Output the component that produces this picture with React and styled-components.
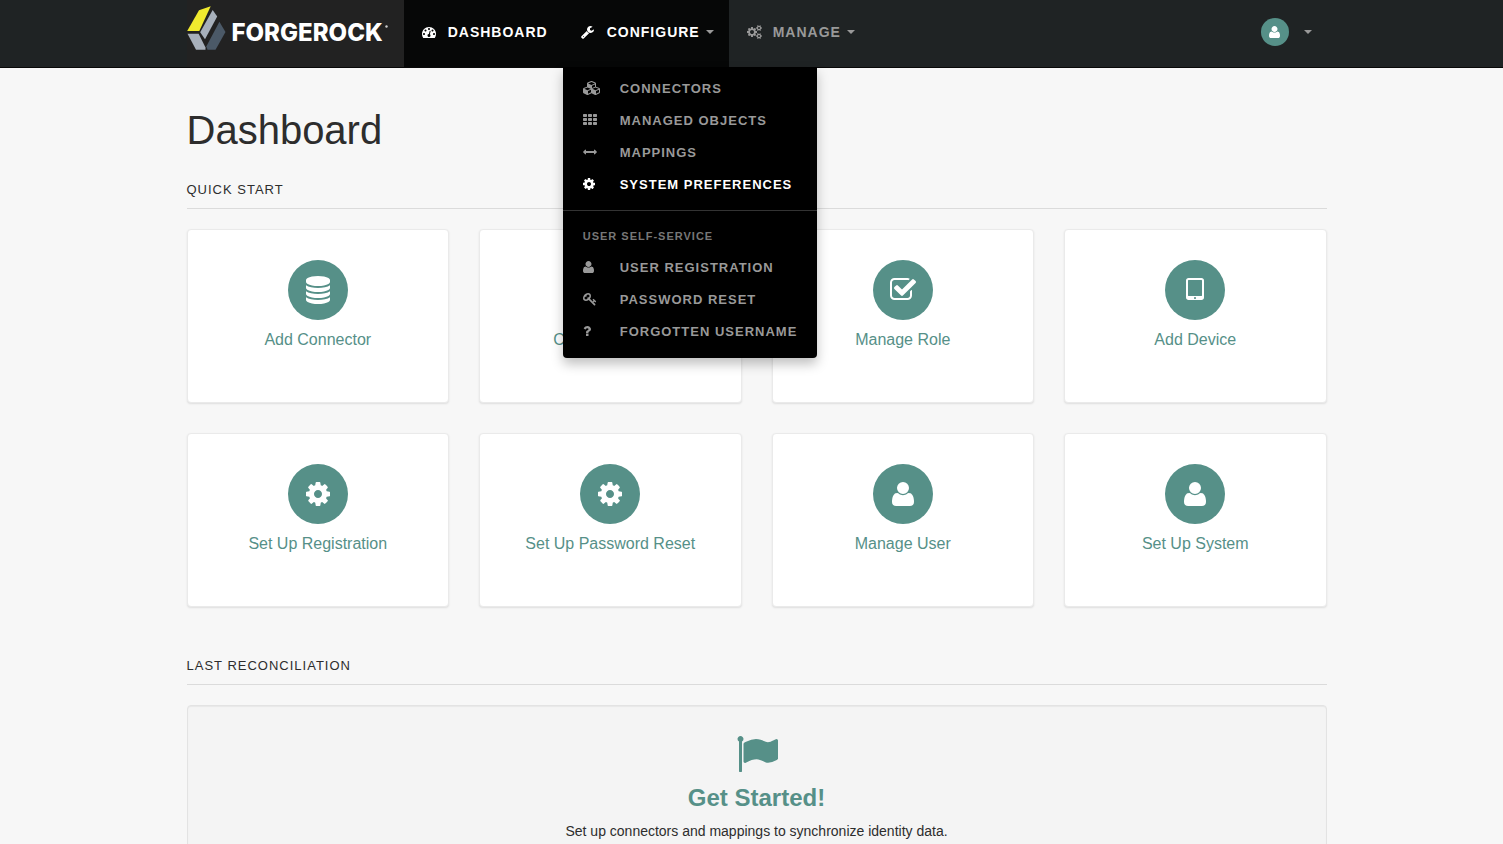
import styled, { createGlobalStyle } from "styled-components";

const teal = '#569088'

// each icon: [left edge, width, path] on a 1792 unit grid
const icons = {
    dashboard: [0, 1792, "M384 1152q0-53-37.500-90.500t-90.500-37.500-90.500 37.500-37.500 90.500 37.500 90.500 90.500 37.500 90.500-37.500 37.500-90.500zm192-448q0-53-37.500-90.500t-90.500-37.500-90.500 37.500-37.500 90.500 37.500 90.500 90.500 37.500 90.500-37.500 37.500-90.500zm428 481l101-382q6-26-7.500-48.500t-38.500-29.500-48 6.500-30 39.500l-101 382q-60 5-107 43.500t-63 98.500q-20 77 20 146t117 89 146-20 89-117q16-60-6-117t-72-91zm660-33q0-53-37.500-90.500t-90.500-37.500-90.500 37.500-37.500 90.500 37.500 90.500 90.500 37.500 90.500-37.500 37.500-90.500zm-640-640q0-53-37.500-90.500t-90.500-37.500-90.500 37.500-37.500 90.500 37.500 90.500 90.500 37.500 90.500-37.500 37.500-90.500zm448 192q0-53-37.500-90.500t-90.500-37.500-90.500 37.500-37.500 90.500 37.500 90.500 90.500 37.500 90.500-37.500 37.500-90.500zm320 448q0 261-141 483-19 29-54 29h-1402q-35 0-54-29-141-221-141-483 0-182 71-348t191-286 286-191 348-71 348 71 286 191 191 286 71 348z"],
    wrench: [64, 1664, "M448 1472q0-26-19-45t-45-19-45 19-19 45 19 45 45 19 45-19 19-45zm644-420l-682 682q-37 37-90 37-52 0-91-37l-106-108q-38-36-38-90 0-53 38-91l681-681q39 98 114.500 173.500t173.500 114.500zm634-435q0 39-23 106-47 134-164.500 217.500t-258.500 83.500q-185 0-316.500-131.500t-131.500-316.500 131.500-316.500 316.500-131.500q58 0 121.500 16.500t107.500 46.500q16 11 16 28t-16 28l-293 169v224l193 107q5-3 79-48.500t135.500-81 70.500-35.500q15 0 23.500 10t8.500 25z"],
    cogs: [0, 1920, "M896 896q0-106-75-181t-181-75-181 75-75 181 75 181 181 75 181-75 75-181zm768 512q0-52-38-90t-90-38-90 38-38 90q0 53 37.500 90.500t90.500 37.500 90.500-37.500 37.500-90.500zm0-1024q0-52-38-90t-90-38-90 38-38 90q0 53 37.500 90.500t90.500 37.500 90.500-37.500 37.500-90.500zm-384 421v185q0 10-7 19.500t-16 10.500l-155 24q-11 35-32 76 34 48 90 115 7 11 7 20 0 12-7 19-23 30-82.500 89.500t-78.500 59.500q-11 0-21-7l-115-90q-37 19-77 31-11 108-23 155-7 24-30 24h-186q-11 0-20-7.500t-10-17.500l-23-153q-34-10-75-31l-118 89q-7 7-20 7-11 0-21-8-144-133-144-160 0-9 7-19 10-14 41-53t47-61q-23-44-35-82l-152-24q-10-1-17-9.500t-7-19.500v-185q0-10 7-19.500t16-10.500l155-24q11-35 32-76-34-48-90-115-7-11-7-20 0-12 7-20 22-30 82-89t79-59q11 0 21 7l115 90q34-18 77-32 11-108 23-154 7-24 30-24h186q11 0 20 7.500t10 17.500l23 153q34 10 75 31l118-89q8-7 20-7 11 0 21 8 144 133 144 160 0 8-7 19-12 16-42 54t-45 60q23 48 34 82l152 23q10 2 17 10.500t7 19.500zm640 533v140q0 16-149 31-12 27-30 52 51 113 51 138 0 4-4 7-122 71-124 71-8 0-46-47t-52-68q-20 2-30 2t-30-2q-14 21-52 68t-46 47q-2 0-124-71-4-3-4-7 0-25 51-138-18-25-30-52-149-15-149-31v-140q0-16 149-31 13-29 30-52-51-113-51-138 0-4 4-7 4-2 35-20t59-34 30-16q8 0 46 46.500t52 67.500q20-2 30-2t30 2q51-71 92-112l6-2q4 0 124 70 4 3 4 7 0 25-51 138 17 23 30 52 149 15 149 31zm0-1024v140q0 16-149 31-12 27-30 52 51 113 51 138 0 4-4 7-122 71-124 71-8 0-46-47t-52-68q-20 2-30 2t-30-2q-14 21-52 68t-46 47q-2 0-124-71-4-3-4-7 0-25 51-138-18-25-30-52-149-15-149-31v-140q0-16 149-31 13-29 30-52-51-113-51-138 0-4 4-7 4-2 35-20t59-34 30-16q8 0 46 46.500t52 67.500q20-2 30-2t30 2q51-71 92-112l6-2q4 0 124 70 4 3 4 7 0 25-51 138 17 23 30 52 149 15 149 31z"],
    cubes: [0, 2304, "M640 1632l384-192v-314l-384 164v342zm-64-454l404-173-404-173-404 173zm1088 454l384-192v-314l-384 164v342zm-64-454l404-173-404-173-404 173zm-448-293l384-165v-266l-384 164v267zm-64-379l441-189-441-189-441 189zm1088 518v416q0 36-19 67t-52 47l-448 224q-25 14-57 14t-57-14l-448-224q-4-2-7-4-2 2-7 4l-448 224q-25 14-57 14t-57-14l-448-224q-33-16-52-47t-19-67v-416q0-38 21.500-70t56.500-48l434-186v-400q0-38 21.500-70t56.500-48l448-192q23-10 50-10t50 10l448 192q35 16 56.500 48t21.500 70v400l434 186q36 16 57 48t21 70z"],
    grid: [64, 1664, "M160 1152h320q96 0 96 96v192q0 96-96 96h-320q-96 0-96-96v-192q0-96 96-96zM160 640h320q96 0 96 96v192q0 96-96 96h-320q-96 0-96-96v-192q0-96 96-96zM160 128h320q96 0 96 96v192q0 96-96 96h-320q-96 0-96-96v-192q0-96 96-96zM800 1152h320q96 0 96 96v192q0 96-96 96h-320q-96 0-96-96v-192q0-96 96-96zM800 640h320q96 0 96 96v192q0 96-96 96h-320q-96 0-96-96v-192q0-96 96-96zM800 128h320q96 0 96 96v192q0 96-96 96h-320q-96 0-96-96v-192q0-96 96-96zM1440 1152h320q96 0 96 96v192q0 96-96 96h-320q-96 0-96-96v-192q0-96 96-96zM1440 640h320q96 0 96 96v192q0 96-96 96h-320q-96 0-96-96v-192q0-96 96-96zM1440 128h320q96 0 96 96v192q0 96-96 96h-320q-96 0-96-96v-192q0-96 96-96z"],
    arrows: [0, 1792, "M1792 896q0 26-19 45l-256 256q-19 19-45 19t-45-19-19-45v-128h-1024v128q0 26-19 45t-45 19-45-19l-256-256q-19-19-19-45t19-45l256-256q19-19 45-19t45 19 19 45v128h1024v-128q0-26 19-45t45-19 45 19l256 256q19 19 19 45z"],
    cog: [128, 1536, "M1152 896q0-106-75-181t-181-75-181 75-75 181 75 181 181 75 181-75 75-181zm512-109v222q0 12-8 23t-20 13l-185 28q-19 54-39 91 35 50 107 138 10 12 10 25t-9 23q-27 37-99 108t-94 71q-12 0-26-9l-138-108q-44 23-91 38-16 136-29 186-7 28-36 28h-222q-14 0-24.500-8.500t-11.500-21.500l-28-184q-49-16-90-37l-141 107q-10 9-25 9-14 0-25-11-126-114-165-168-7-10-7-23 0-12 8-23 15-21 51-66.500t54-70.500q-27-50-41-99l-183-27q-13-2-21-12.500t-8-23.500v-222q0-12 8-23t19-13l186-28q14-46 39-92-40-57-107-138-10-12-10-24 0-10 9-23 26-36 98.500-107.500t94.500-71.500q13 0 26 10l138 107q44-23 91-38 16-136 29-186 7-28 36-28h222q14 0 24.500 8.500t11.500 21.500l28 184q49 16 90 37l142-107q9-9 24-9 13 0 25 10 129 119 165 170 7 8 7 22 0 12-8 23-15 21-51 66.500t-54 70.500q26 50 41 98l183 28q13 2 21 12.500t8 23.500z"],
    user: [192, 1408, "M1600 1405q0 120-73 189.500t-194 69.500h-874q-121 0-194-69.500t-73-189.500q0-53 3.500-103.500t14-109 26.500-108.500 43-97.500 62-81 85.500-53.500 111.500-20q9 0 42 21.500t74.500 48 108 48 133.500 21.500 133.500-21.500 108-48 74.500-48 42-21.500q61 0 111.500 20t85.500 53.500 62 81 43 97.500 26.500 108.500 14 109 3.500 103.500zm-320-893q0 159-112.500 271.500t-271.500 112.500-271.500-112.500-112.500-271.500 112.500-271.500 271.500-112.500 271.500 112.500 112.500 271.500z"],
    key: [0, 1792, "M832 512q0-80-56-136t-136-56-136 56-56 136q0 42 19 83-41-19-83-19-80 0-136 56t-56 136 56 136 136 56 136-56 56-136q0-42-19-83 41 19 83 19 80 0 136-56t56-136zm851 704q0 17-49 66t-66 49q-9 0-28.500-16t-36.500-33-38.500-40-24.500-26l-96 96 220 220q28 28 28 68 0 42-39 81t-81 39q-40 0-68-28l-671-671q-176 131-365 131-163 0-265.500-102.500t-102.500-265.500q0-160 95-313t248-248 313-95q163 0 265.500 102.500t102.500 265.500q0 189-131 365l355 355 96-96q-3-3-26-24.500t-40-38.500-33-36.500-16-28.500q0-17 49-66t66-49q13 0 23 10 6 6 46 44.500t82 79.500 86.500 86 73 78 28.500 41z"],
    question: [384, 1152, "M1088 1256v240q0 16-12 28t-28 12h-240q-16 0-28-12t-12-28v-240q0-16 12-28t28-12h240q16 0 28 12t12 28zm316-600q0 54-15.500 101t-35 76.500-55 59.500-57.500 43.500-61 35.500q-41 23-68.500 65t-27.500 67q0 17-12 32.500t-28 15.500h-240q-15 0-25.500-18.500t-10.500-37.500v-45q0-83 65-156.500t143-108.500q59-27 84-56t25-76q0-42-46.500-74t-107.500-32q-65 0-108 29-35 25-107 115-13 16-31 16-12 0-25-8l-164-125q-13-10-15.500-25t5.500-28q160-266 464-266 80 0 161 31t146 83 106 127.500 41 158.500z"],
    database: [128, 1536, "M896 768q237 0 443-43t325-127v170q0 69-103 128t-280 93.500-385 34.500-385-34.500-280-93.500-103-128v-170q119 84 325 127t443 43zm0 768q237 0 443-43t325-127v170q0 69-103 128t-280 93.500-385 34.500-385-34.500-280-93.500-103-128v-170q119 84 325 127t443 43zm0-384q237 0 443-43t325-127v170q0 69-103 128t-280 93.500-385 34.500-385-34.500-280-93.500-103-128v-170q119 84 325 127t443 43zm0-1152q208 0 385 34.500t280 93.500 103 128v128q0 69-103 128t-280 93.500-385 34.500-385-34.500-280-93.500-103-128v-128q0-69 103-128t280-93.500 385-34.500z"],
    check: [64, 1664, "M1472 930v318q0 119-84.500 203.500t-203.500 84.500h-832q-119 0-203.500-84.500t-84.500-203.500v-832q0-119 84.500-203.500t203.500-84.500h832q63 0 117 25 15 7 18 23 3 17-9 29l-49 49q-10 10-23 10-3 0-9-2-23-6-45-6h-832q-66 0-113 47t-47 113v832q0 66 47 113t113 47h832q66 0 113-47t47-113v-254q0-13 9-22l64-64q10-10 23-10 6 0 12 3 20 8 20 29zm231-489l-814 814q-24 24-57 24t-57-24l-430-430q-24-24-24-57t24-57l110-110q24-24 57-24t57 24l263 263 647-647q24-24 57-24t57 24l110 110q24 24 24 57t-24 57z"],
    tablet: [320, 1152, "M960 1408q0-26-19-45t-45-19-45 19-19 45 19 45 45 19 45-19 19-45zm384-160v-960q0-13-9.500-22.500t-22.500-9.500h-832q-13 0-22.500 9.500t-9.500 22.500v960q0 13 9.500 22.500t22.500 9.500h832q13 0 22.500-9.500t9.500-22.500zm128-960v1088q0 66-47 113t-113 47h-832q-66 0-113-47t-47-113v-1088q0-66 47-113t113-47h832q66 0 113 47t47 113z"],
    flag: [0, 1792, "M320 256q0 72-64 110v1266q0 13-9.500 22.500t-22.500 9.500h-64q-13 0-22.500-9.500t-9.500-22.500v-1266q-64-38-64-110 0-53 37.500-90.500t90.500-37.500 90.500 37.500 37.500 90.500zm1472 64v763q0 25-12.500 38.500t-39.500 27.500q-215 116-369 116-61 0-123.500-22t-108.500-48-115.500-48-142.500-22q-192 0-464 146-17 9-33 9-26 0-45-19t-19-45v-742q0-32 31-55 21-14 79-43 236-120 421-120 107 0 200 29t219 88q38 19 88 19 54 0 117.500-21t110-47 88-47 54.500-21q26 0 45 19t19 45z"],
}

const cards = [
    { icon: 'database', label: 'Add Connector' },
    { icon: 'arrows', label: 'Create Mapping' },
    { icon: 'check', label: 'Manage Role' },
    { icon: 'tablet', label: 'Add Device' },
    { icon: 'cog', label: 'Set Up Registration' },
    { icon: 'cog', label: 'Set Up Password Reset' },
    { icon: 'user', label: 'Manage User' },
    { icon: 'user', label: 'Set Up System' },
]

const Icon = ({ name, size = 14 }) => {
    const [x, w, d] = icons[name]
    return (
        <svg viewBox={`${x} 0 ${w} 1792`} width={size * w / 1792} height={size} fill="currentColor" overflow="visible" aria-hidden="true">
            <path d={d} />
        </svg>
    )
}

const MenuLink = ({ icon, active, children }) => (
    <li>
        <MenuItem href="#" $active={active}>
            <MenuIcon><Icon name={icon} /></MenuIcon>
            {children}
        </MenuItem>
    </li>
)

const App = () => {
    return (
        <>
            <GlobalStyle />
            <Header>
                <Container as="nav">
                    <Brand href="#" aria-label="ForgeRock">
                        <svg width="39" height="44" viewBox="187 6 39 44" aria-hidden="true">
                            <path fill="#f0ea2e" d="M199 10.300L210.700 6.200 199.300 31H187.200z" />
                            <path fill="#a7b0bb" d="M212.700 10L217.200 16.600 205 39.300 200.200 32.200z" />
                            <path fill="#a7b0bb" d="M187.500 33.800H198.600L205.500 47.500V49.700H196z" />
                            <path fill="#4b5967" d="M219.400 21.800L225.500 32 215.500 49.700H207.500L206.300 46.500z" />
                        </svg>
                        <BrandName>
                            FORGEROCK
                            <svg width="3" height="16" viewBox="0 0 3 16" aria-hidden="true">
                                <circle cx="1.500" cy="1.500" r="1.200" fill="#ccc" />
                            </svg>
                        </BrandName>
                    </Brand>
                    <NavItem as="a" href="#" $active>
                        <NavIcon><Icon name="dashboard" /></NavIcon>
                        Dashboard
                    </NavItem>
                    <Dropdown>
                        <NavItem type="button" aria-expanded="true" $active>
                            <NavIcon><Icon name="wrench" /></NavIcon>
                            Configure
                            <Caret />
                        </NavItem>
                        <Menu>
                            <MenuLink icon="cubes">Connectors</MenuLink>
                            <MenuLink icon="grid">Managed Objects</MenuLink>
                            <MenuLink icon="arrows">Mappings</MenuLink>
                            <MenuLink icon="cog" active>System Preferences</MenuLink>
                            <Divider role="separator" />
                            <MenuHeader>User Self-Service</MenuHeader>
                            <MenuLink icon="user">User Registration</MenuLink>
                            <MenuLink icon="key">Password Reset</MenuLink>
                            <MenuLink icon="question">Forgotten Username</MenuLink>
                        </Menu>
                    </Dropdown>
                    <NavItem type="button">
                        <NavIcon><Icon name="cogs" /></NavIcon>
                        Manage
                        <Caret />
                    </NavItem>
                    <UserButton type="button" aria-label="User menu">
                        <Avatar><Icon name="user" /></Avatar>
                        <Caret />
                    </UserButton>
                </Container>
            </Header>
            <Page>
                <Content>
                    <Title>Dashboard</Title>
                    <SectionTitle>Quick Start</SectionTitle>
                    <CardGrid>
                        {cards.map(({ icon, label }) => (
                            <Card href="#" key={label}>
                                <Circle><Icon name={icon} size={28} /></Circle>
                                {label}
                            </Card>
                        ))}
                    </CardGrid>
                    <SectionTitle $spaced>Last Reconciliation</SectionTitle>
                    <Well>
                        <Icon name="flag" size={42} />
                        <h3>Get Started!</h3>
                        <p>Set up connectors and mappings to synchronize identity data.</p>
                    </Well>
                </Content>
            </Page>
        </>
    );
}

export default App;


const GlobalStyle = createGlobalStyle`
    * {
        box-sizing: border-box;
    }
    body {
        margin: 0;
        background-color: #f7f7f7;
        color: #2d2d2d;
        font-family: "Liberation Sans", Arial, sans-serif;
        font-size: 14px;
        line-height: 20px;
    }
    a {
        text-decoration: none;
    }
    svg {
        display: block;
        flex: none;
    }
`

const Container = styled.div`
    display: flex;
    max-width: 1140px;
    margin: 0 auto;
`

const Content = styled.div`
    max-width: 1140px;
    margin: 0 auto;
`

const Header = styled.header`
    position: relative;
    z-index: 10;
    padding-left: 10px;
    background-color: #1f2324;
    border-bottom: 1px solid #080808;
`

const Page = styled.main`
    padding: 40px 0 60px 10px;
`

const Brand = styled.a`
    display: flex;
    align-items: center;
    padding: 6px 16px 17px 0;
    background-color: #222;
    color: white;
`

const BrandName = styled.span`
    display: flex;
    align-items: center;
    gap: 2px;
    margin-left: 6px;
    padding-top: 9px;
    font-family: Inter, sans-serif;
    font-size: 24px;
    font-weight: 800;
    line-height: 24px;
`

const NavItem = styled.button`
    display: flex;
    align-items: center;
    padding: 22px 15px 25px 18px;
    border: 0;
    background-color: ${({ $active }) => $active ? '#060707' : 'transparent'};
    color: ${({ $active }) => $active ? 'white' : '#999'};
    font: bold 14px/20px "Liberation Sans", Arial, sans-serif;
    letter-spacing: 1px;
    text-transform: uppercase;
    cursor: pointer;
`

const NavIcon = styled.span`
    width: 26px;
`

const Caret = styled.span`
    margin-left: 6px;
    border-top: 4px solid #999;
    border-right: 4px solid transparent;
    border-left: 4px solid transparent;
`

const Dropdown = styled.div`
    position: relative;
`

const Menu = styled.ul`
    position: absolute;
    top: 100%;
    left: 0;
    min-width: 254px;
    margin: 0;
    padding: 5px 0 11px;
    list-style: none;
    background-color: black;
    border-radius: 0 0 4px 4px;
    box-shadow: 0 6px 12px rgba(0, 0, 0, 0.25);
    text-transform: uppercase;
    letter-spacing: 1px;
    white-space: nowrap;
`

const MenuItem = styled.a`
    display: flex;
    align-items: center;
    padding: 6px 20px 5px;
    color: ${({ $active }) => $active ? 'white' : '#999'};
    font-size: 13px;
    font-weight: bold;
    line-height: 21px;
    &:hover {
        color: white;
    }
`

const MenuIcon = styled.span`
    width: 37px;
    margin-bottom: 1px;
`

const Divider = styled.li`
    height: 1px;
    margin: 10px 0 15px;
    background-color: #333;
`

const MenuHeader = styled.li`
    padding: 0 20px 5px;
    color: #777;
    font-size: 11px;
    font-weight: bold;
`

const UserButton = styled.button`
    display: flex;
    align-items: center;
    gap: 9px;
    margin-left: auto;
    padding: 18px 15px 21px;
    border: 0;
    background: none;
    cursor: pointer;
`

const Avatar = styled.span`
    display: flex;
    align-items: center;
    justify-content: center;
    width: 28px;
    height: 28px;
    border-radius: 50%;
    background-color: ${teal};
    color: white;
`

const Title = styled.h1`
    margin: 0 0 27px;
    font-size: 40px;
    font-weight: normal;
    line-height: 44px;
`

const SectionTitle = styled.h2`
    margin: ${({ $spaced }) => $spaced ? '48px' : '0'} 0 20px;
    padding-bottom: 8px;
    border-bottom: 1px solid #dbdbdb;
    font-size: 13px;
    font-weight: normal;
    line-height: 21px;
    letter-spacing: 1px;
    text-transform: uppercase;
`

const CardGrid = styled.div`
    display: grid;
    grid-template-columns: repeat(4, 1fr);
    gap: 30px;
`

const Card = styled.a`
    display: flex;
    flex-flow: column;
    align-items: center;
    min-height: 174px;
    padding: 30px 15px;
    background-color: white;
    border: 1px solid #eaeaea;
    border-radius: 4px;
    box-shadow: 0 1px 2px rgba(0, 0, 0, 0.1);
    color: ${teal};
    font-size: 16px;
`

const Circle = styled.span`
    display: flex;
    align-items: center;
    justify-content: center;
    width: 60px;
    height: 60px;
    margin-bottom: 10px;
    border-radius: 50%;
    background-color: ${teal};
    color: white;
`

const Well = styled.section`
    display: flex;
    flex-flow: column;
    align-items: center;
    padding: 27px 19px 60px;
    background-color: #f4f4f4;
    border: 1px solid #e3e3e3;
    border-radius: 4px;
    box-shadow: inset 0 1px 1px rgba(0, 0, 0, 0.05);
    color: ${teal};
    h3 {
        margin: 10px 0;
        font-size: 24px;
        line-height: 26px;
    }
    p {
        margin: 0;
        color: #2d2d2d;
    }
`
